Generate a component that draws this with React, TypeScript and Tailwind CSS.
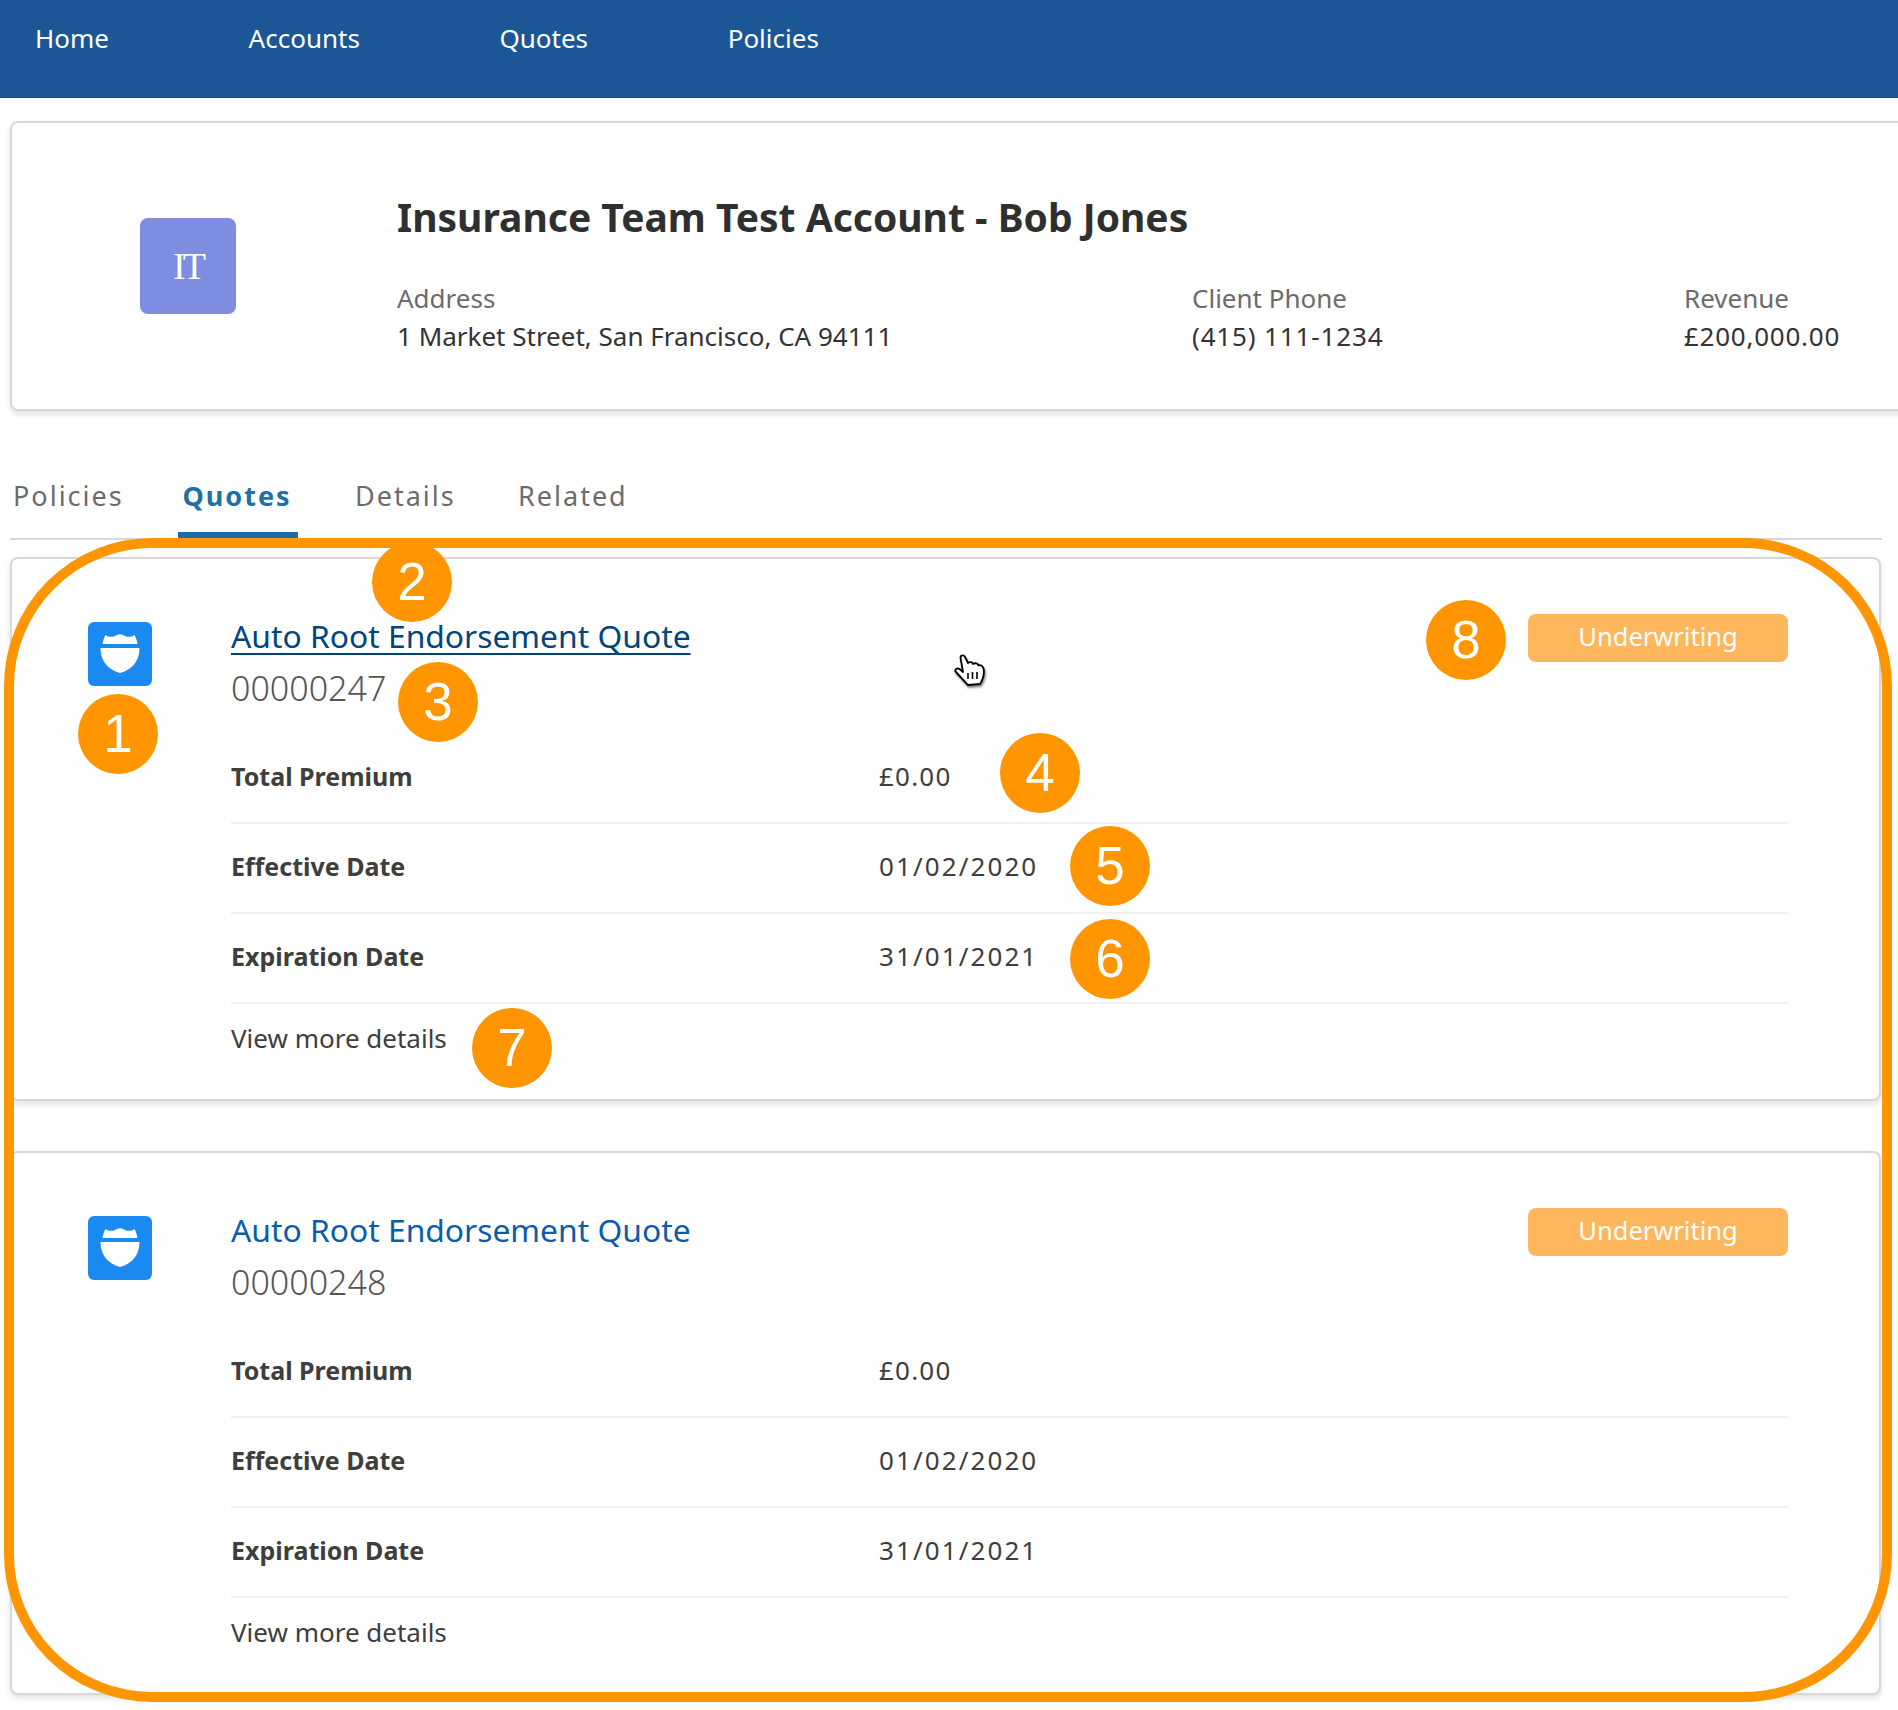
const NAV = ['Home', 'Accounts', 'Quotes', 'Policies'];

const MARKERS = [
  { n: 1, x: 78, y: 694 },
  { n: 2, x: 372, y: 542 },
  { n: 3, x: 398, y: 662 },
  { n: 4, x: 1000, y: 733 },
  { n: 5, x: 1070, y: 826 },
  { n: 6, x: 1070, y: 919 },
  { n: 7, x: 472, y: 1008 },
  { n: 8, x: 1426, y: 600 },
];

function ShieldIcon() {
  return (
    <div className="mt-[8px] w-[64px] h-[64px] shrink-0 rounded-md bg-[#1b8af0]">
      <svg viewBox="0 0 64 64" className="w-[64px] h-[64px]" fill="#ffffff">
        <path d="M14.5 22C15 18.5 16 15.5 17.5 13C20 15 24 15.5 27 14C29 13 30.5 12.3 32 12.3C33.5 12.3 35 13 37 14C40 15.5 44 15 46.5 13C48 15.5 49 18.5 49.5 22Z" />
        <path d="M12.5 26H51.5C51.5 40 43 48 32 51C21 48 12.5 40 12.5 26Z" />
      </svg>
    </div>
  );
}

function Row({ label, value, spaced }: { label: string; value: string; spaced?: boolean }) {
  return (
    <div className="flex items-center h-[90px] pb-[2px] border-b-2 border-[#f0f0f5] text-[#3e3e3c]">
      <div className="w-[648px] text-[25px] font-bold">{label}</div>
      <div className={`-mt-[2px] text-[26px] ${spaced ? 'tracking-[2.1px]' : 'tracking-[1.2px]'}`}>{value}</div>
    </div>
  );
}

function QuoteCard({ number, hovered }: { number: string; hovered?: boolean }) {
  return (
    <div className="ml-[10px] w-[1871px] h-[544px] flex gap-[79px] pl-[76px] pt-[55px] bg-white border-2 border-[#d8d8d8] rounded-lg shadow-[0_3px_6px_rgba(0,0,0,0.12)]">
      <ShieldIcon />
      <div className="w-[1557px]">
        <div className="flex justify-between items-start">
          <a className={`text-[31.8px] leading-[44px] ${hovered ? 'text-[#00457e] underline underline-offset-[5px] decoration-2' : 'text-[#0b5cab]'}`}>
            Auto Root Endorsement Quote
          </a>
          <div className="w-[260px] h-[48px] pb-[3px] rounded-lg bg-[#ffb75d] text-white text-[25.5px] flex items-center justify-center">
            Underwriting
          </div>
        </div>
        <div className="mt-[3px] mb-[23px] text-[34px] leading-[46px] font-light text-[#555555]">{number}</div>
        <Row label="Total Premium" value="£0.00" />
        <Row label="Effective Date" value="01/02/2020" spaced />
        <Row label="Expiration Date" value="31/01/2021" spaced />
        <div className="h-[72px] pb-[3px] flex items-center text-[26px] text-[#3e3e3c]">View more details</div>
      </div>
    </div>
  );
}

export default function App() {
  return (
    <div className="relative w-[1898px] h-[1710px] overflow-hidden bg-white font-['Noto_Sans',sans-serif]">
      <nav className="h-[98px] pl-[35px] pt-[19px] flex gap-[139.6px] bg-[#1b5797] border-b border-[#2e3f80] text-white text-[26px] leading-[38px]">
        {NAV.map((item) => (
          <a key={item}>{item}</a>
        ))}
      </nav>

      <div className="mt-[23px] ml-[10px] w-[1900px] h-[290px] flex items-center pl-[128px] bg-white border-2 border-[#d8d8d8] rounded-lg shadow-[0_3px_6px_rgba(0,0,0,0.12)]">
        <div className="w-[96px] h-[96px] shrink-0 rounded-lg bg-[#7f8de1] text-white flex items-center justify-center font-['Liberation_Serif',serif] text-[38px] tracking-[-3px]">
          IT
        </div>
        <div className="ml-[161px] mt-[13px]">
          <h1 className="text-[39px] leading-[54px] font-bold text-[#2f2f2f]">Insurance Team Test Account - Bob Jones</h1>
          <div className="mt-[35px] flex text-[26px] leading-[38px]">
            <div className="w-[795px]">
              <div className="text-[#6b6b6b]">Address</div>
              <div className="text-[#333333]">1 Market Street, San Francisco, CA 94111</div>
            </div>
            <div className="w-[492px]">
              <div className="text-[#6b6b6b]">Client Phone</div>
              <div className="text-[#333333] tracking-[0.85px]">(415) 111-1234</div>
            </div>
            <div>
              <div className="text-[#6b6b6b]">Revenue</div>
              <div className="text-[#333333] tracking-[0.75px]">£200,000.00</div>
            </div>
          </div>
        </div>
      </div>

      <div className="mt-[58px] ml-[10px] w-[1872px] h-[71px] flex border-b-2 border-[#d8d8d8] text-[27px] leading-[38px] tracking-[2px] text-[#6b6b6b]">
        <div className="w-[168px] pl-[3px] pt-[8px]">Policies</div>
        <div className="w-[120px] h-[69px] pr-[2px] pt-[8px] text-center font-bold text-[#1f6fa8] border-b-[6px] border-[#1b6ca8]">Quotes</div>
        <div className="w-[220px] pl-[57px] pt-[8px]">Details</div>
        <div className="pt-[8px]">Related</div>
      </div>

      <div className="mt-[17px]">
        <QuoteCard number="00000247" hovered />
      </div>
      <div className="mt-[50px]">
        <QuoteCard number="00000248" />
      </div>

      {/* annotation layer */}
      <div className="absolute left-[4px] top-[538px] w-[1888px] h-[1164px] rounded-[148px] border-[10px] border-[#ff9500]" />
      {MARKERS.map((m) => (
        <div
          key={m.n}
          className="absolute w-[80px] h-[80px] rounded-full bg-[#ff9500] text-white flex items-center justify-center font-['Liberation_Sans',sans-serif] text-[53px]"
          style={{ left: m.x, top: m.y }}
        >
          {m.n}
        </div>
      ))}
      <svg viewBox="0 0 32 34" className="absolute left-[953px] top-[654px] w-[32px] h-[34px] drop-shadow-[1px_2px_1px_rgba(0,0,0,0.5)]">
        <path
          d="M7.5 3.5C7.5 1 11 .5 12 3L15 9C17 7.5 19.5 8 20 10C22 8.5 25 9.5 25.5 11.5C27.5 10.5 30 12 30.5 14.5C31.5 19 30 25 27 30L15 31C11 27 6 21 2.5 17.5C1.5 15.5 4 13.5 6.5 15L10 18Z"
          fill="#ffffff"
          stroke="#000000"
          strokeWidth="1.8"
          strokeLinejoin="round"
        />
        <path d="M15 19V25M19.5 18V25M24 18V25" stroke="#000000" strokeWidth="1.6" fill="none" />
      </svg>
    </div>
  );
}
